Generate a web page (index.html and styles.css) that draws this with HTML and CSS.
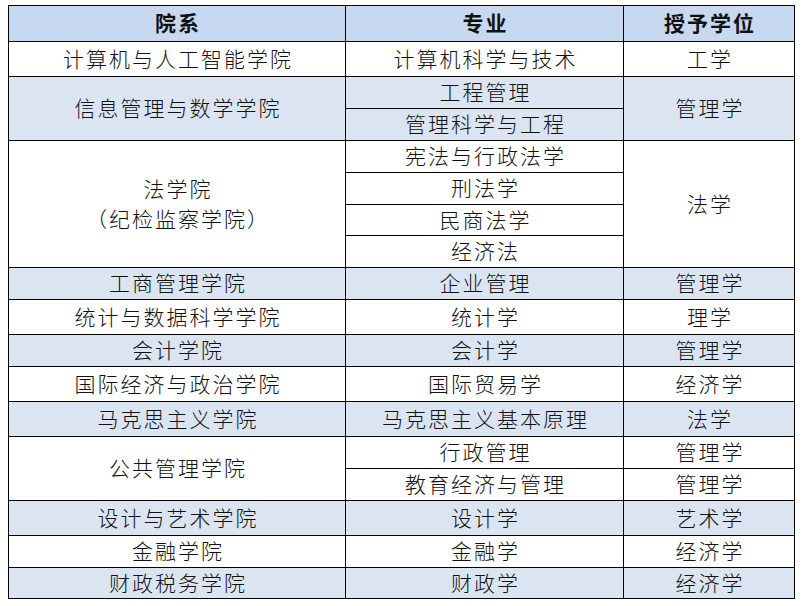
FILE: index.html
```html
<!DOCTYPE html>
<html lang="zh-CN">
<head>
<meta charset="utf-8">
<title>院系专业</title>
<link rel="stylesheet" href="styles.css">
</head>
<body>
<div class="table">
  <div class="c hd">院系</div>
  <div class="c hd">专业</div>
  <div class="c hd">授予学位</div>

  <div class="c">计算机与人工智能学院</div>
  <div class="c">计算机科学与技术</div>
  <div class="c">工学</div>

  <div class="c alt s2">信息管理与数学学院</div>
  <div class="c alt">工程管理</div>
  <div class="c alt s2">管理学</div>
  <div class="c alt">管理科学与工程</div>

  <div class="c s4">法学院<br>（纪检监察学院）</div>
  <div class="c">宪法与行政法学</div>
  <div class="c s4">法学</div>
  <div class="c">刑法学</div>
  <div class="c">民商法学</div>
  <div class="c">经济法</div>

  <div class="c alt">工商管理学院</div>
  <div class="c alt">企业管理</div>
  <div class="c alt">管理学</div>

  <div class="c">统计与数据科学学院</div>
  <div class="c">统计学</div>
  <div class="c">理学</div>

  <div class="c alt">会计学院</div>
  <div class="c alt">会计学</div>
  <div class="c alt">管理学</div>

  <div class="c">国际经济与政治学院</div>
  <div class="c">国际贸易学</div>
  <div class="c">经济学</div>

  <div class="c alt">马克思主义学院</div>
  <div class="c alt">马克思主义基本原理</div>
  <div class="c alt">法学</div>

  <div class="c s2">公共管理学院</div>
  <div class="c">行政管理</div>
  <div class="c">管理学</div>
  <div class="c">教育经济与管理</div>
  <div class="c">管理学</div>

  <div class="c alt">设计与艺术学院</div>
  <div class="c alt">设计学</div>
  <div class="c alt">艺术学</div>

  <div class="c">金融学院</div>
  <div class="c">金融学</div>
  <div class="c">经济学</div>

  <div class="c alt">财政税务学院</div>
  <div class="c alt">财政学</div>
  <div class="c alt">经济学</div>
</div>
</body>
</html>
```

FILE: styles.css
```css
html, body {
  background: #ffffff;
}
body {
  margin: 5px 0 0 8px;
  font-family: "Noto Sans CJK SC", "Noto Sans", sans-serif;
  color: #111111;
}
.table {
  display: inline-grid;
  grid-template-columns: 336px 277px 170px;
  grid-template-rows: 35px 34px 31px 31px 31px 31px 30px 31px 31px 34px 31px 34px 34px 31px 31px 34px 31px 30px;
  gap: 1px;
  padding: 1px;
  background: #000000;
}
.c {
  background: #ffffff;
  display: flex;
  align-items: center;
  justify-content: center;
  text-align: center;
  font-size: 21px;
  font-weight: 300;
  letter-spacing: 2px;
  line-height: 30px;
  white-space: nowrap;
  padding: 0 0 3px 2px;
}
.hd {
  background: #c6d9f1;
  font-weight: 700;
  font-size: 21px;
}
.alt {
  background: #dbe5f1;
}
.s2 {
  grid-row: span 2;
}
.s4 {
  grid-row: span 4;
}
```
